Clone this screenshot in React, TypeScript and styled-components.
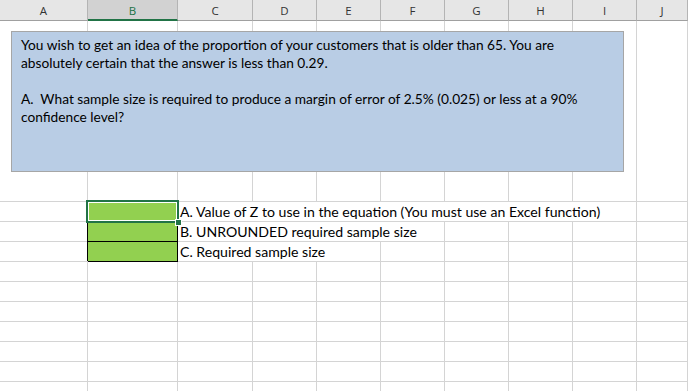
import React from 'react';
import styled, {createGlobalStyle} from 'styled-components';

const columns = ['A', 'B', 'C', 'D', 'E', 'F', 'G', 'H', 'I', 'J'];
const template = '88px 90px 75px 64px 64px 64px 64px 64px 64px 1fr';

const GlobalStyle = createGlobalStyle`
  html, body {
    margin: 0;
    padding: 0;
    background: #fff;
    overflow: hidden;
  }
  body {
    font-family: Lato, "Noto Sans", sans-serif;
  }
`;

const Sheet = styled.div`
  position: relative;
  width: 688px;
  height: 391px;
  overflow: hidden;
`;

const Row = styled.div<{ $height: number }>`
  display: grid;
  grid-template-columns: ${template};
  height: ${p => p.$height}px;
`;

const HeadCell = styled.div<{ $active?: boolean }>`
  box-sizing: border-box;
  display: flex;
  align-items: center;
  justify-content: center;
  padding-top: 1px;
  background: ${p => (p.$active ? '#D2D2D2' : '#E6E6E6')};
  border-right: 1px solid #B4B4B4;
  border-bottom: ${p => (p.$active ? '2px solid #217346' : '1px solid #A0A0A0')};
  color: ${p => (p.$active ? '#217346' : '#333')};
  font-family: "Open Sans", sans-serif;
  font-size: 11.5px;
`;

const Cell = styled.div<{ $span?: number; $green?: boolean }>`
  position: relative;
  box-sizing: border-box;
  grid-column: span ${p => p.$span ?? 1};
  border-right: 1px solid ${p => (p.$green ? '#000' : '#D4D4D4')};
  border-bottom: 1px solid ${p => (p.$green ? '#000' : '#D4D4D4')};
  background: ${p => (p.$green ? '#92D050' : '#fff')};
  box-shadow: ${p => (p.$green ? '-1px -1px 0 #000' : 'none')};
  padding-left: 2px;
  font-size: 14.1px;
  line-height: 19px;
  white-space: nowrap;
  color: #000;
`;

const Selection = styled.div`
  position: absolute;
  left: -2px;
  top: -2px;
  right: -2px;
  bottom: -2px;
  border: 2px solid #217346;
  box-shadow: inset 0 0 0 1px #fff;
  z-index: 2;
`;

const FillHandle = styled.div`
  position: absolute;
  right: -5px;
  bottom: -5px;
  width: 5px;
  height: 5px;
  background: #217346;
  border: 1px solid #fff;
`;

const TextBox = styled.div`
  position: absolute;
  left: 11px;
  top: 31px;
  width: 613px;
  height: 141px;
  box-sizing: border-box;
  background: #B9CDE5;
  border: 1px solid #A6A6A6;
  padding: 4px 9px;
  font-size: 13.72px;
  line-height: 18px;
  color: #000;
`;

const Line = styled.div<{ $gap?: boolean }>`
  white-space: nowrap;
  margin-top: ${p => (p.$gap ? '18px' : '0')};
`;

const answers = [
  {text: 'A. Value of Z to use in the equation (You must use an Excel function)', span: 7, selected: true},
  {text: 'B. UNROUNDED required sample size', span: 4},
  {text: 'C. Required sample size', span: 3},
];

export default function App() {
  return (
    <Sheet>
      <GlobalStyle/>
      <Row $height={21}>
        {columns.map(c => (
          <HeadCell key={c} $active={c === 'B'}>{c}</HeadCell>
        ))}
      </Row>
      <Row $height={181}>
        {columns.map(c => <Cell key={c}/>)}
      </Row>
      {answers.map(a => (
        <Row key={a.text} $height={20}>
          <Cell/>
          <Cell $green>
            {a.selected && (
              <Selection>
                <FillHandle/>
              </Selection>
            )}
          </Cell>
          <Cell $span={a.span}>{a.text}</Cell>
          {Array.from({length: 8 - a.span}).map((_, i) => <Cell key={i}/>)}
        </Row>
      ))}
      {Array.from({length: 7}).map((_, r) => (
        <Row key={r} $height={20}>
          {columns.map(c => <Cell key={c}/>)}
        </Row>
      ))}
      <TextBox>
        <Line>You wish to get an idea of the proportion of your customers that is older than 65. You are</Line>
        <Line>absolutely certain that the answer is less than 0.29.</Line>
        <Line $gap>A.&nbsp; What sample size is required to produce a margin of error of 2.5% (0.025) or less at a 90%</Line>
        <Line>confidence level?</Line>
      </TextBox>
    </Sheet>
  );
}
